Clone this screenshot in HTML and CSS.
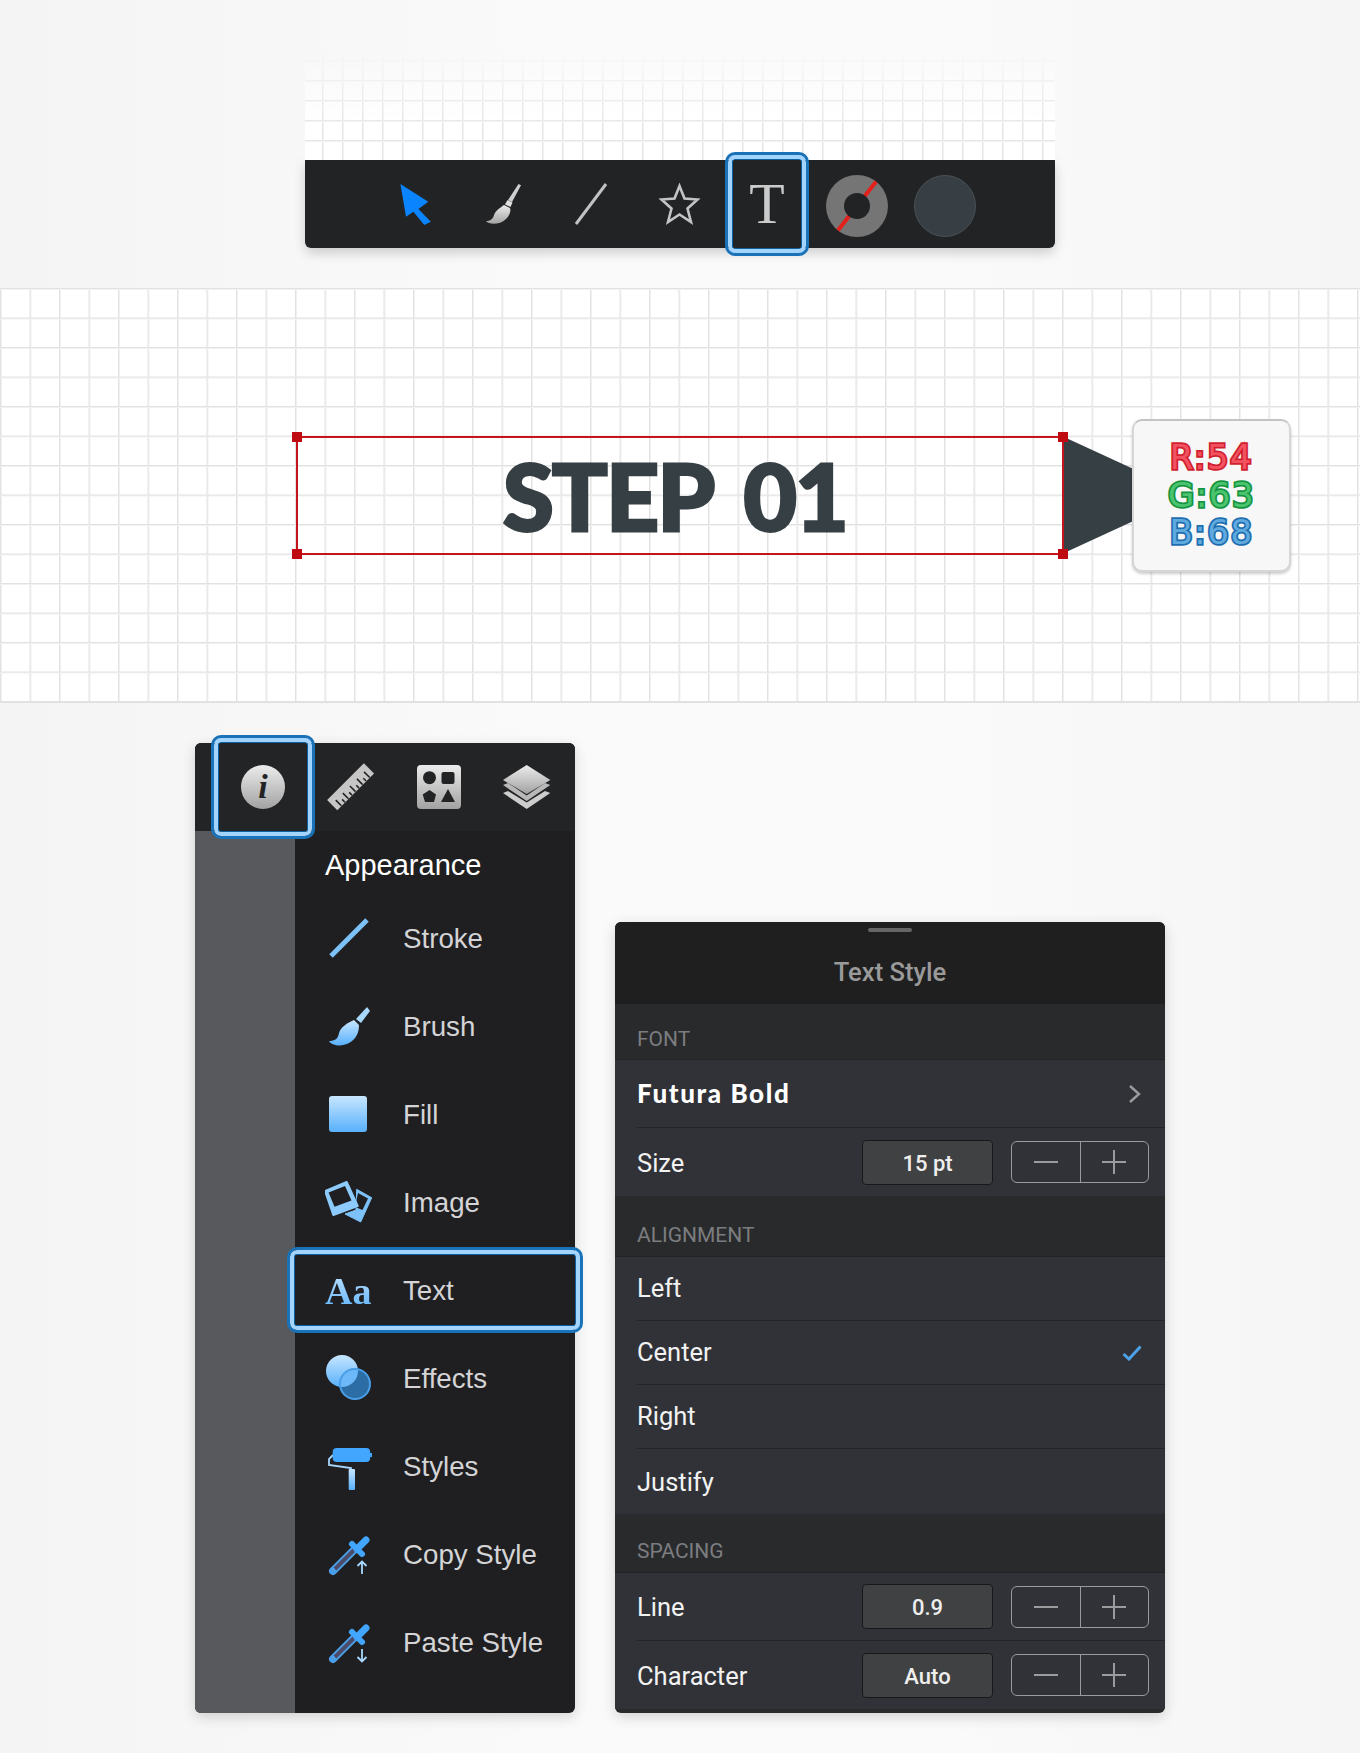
FILE: index.html
```html
<!DOCTYPE html>
<html lang="en">
    <head>
        <meta charset="UTF-8" />
        <title>Step 01 - Text Style</title>
        <link rel="stylesheet" href="styles.css">
    </head>
    <body>
        <div class="zonaBarra">
            <div class="preview"></div>
            <div class="barra">
                <div class="celda">
                    <svg width="48" height="48" viewBox="0 0 48 48">
                        <defs>
                            <linearGradient id="azul" x1="0" y1="0" x2="0" y2="1"><stop offset="0" stop-color="#c8e6ff"/><stop offset="1" stop-color="#58b0fc"/></linearGradient>
                            <linearGradient id="gris" x1="0" y1="0" x2="0" y2="1"><stop offset="0" stop-color="#ececec"/><stop offset="1" stop-color="#a2a2a2"/></linearGradient>
                        </defs>
                        <polygon points="9.4,4 37.3,21.7 27.4,29 39.8,41.7 33.3,45 22.4,31.7 15,36.7" fill="#0a84ff"/>
                    </svg>
                </div>
                <div class="celda">
                    <svg width="48" height="48" viewBox="0 0 48 48">
                        <polygon points="39.5,4 42,5.2 33,22 29,20" fill="#cfcfcf"/>
                        <polygon points="28.5,20 33.5,22.5 31.5,27 26,24.5" fill="#e0e0e0"/>
                        <path d="M25 25 C21 28 17 30 15 35 C14 39 11 41 7 41 C10 45 21 45 27 39 C31 35 32 31 31 28 Z" fill="url(#gris)"/>
                    </svg>
                </div>
                <div class="celda">
                    <svg width="48" height="48" viewBox="0 0 48 48">
                        <line x1="9" y1="44" x2="39" y2="4" stroke="#c2c2c2" stroke-width="3"/>
                    </svg>
                </div>
                <div class="celda">
                    <svg width="48" height="48" viewBox="0 0 48 48">
                        <polygon points="24.5,6 29.5,18.5 42.5,19.5 32.5,28.5 36,42 24.5,34.5 13,42 16.5,28.5 6.5,19.5 19.5,18.5" fill="none" stroke="#c4c4c4" stroke-width="2.6"/>
                    </svg>
                </div>
                <div class="celda sel selBarra"><span class="letraT">T</span></div>
                <div class="celda"><div class="aro"><div class="aroHueco"></div><div class="aroRaya"></div></div></div>
                <div class="celda"><div class="disco"></div></div>
            </div>
        </div>

        <div class="lienzo">
            <div class="caja">
                <span class="asa asa1"></span><span class="asa asa2"></span><span class="asa asa3"></span><span class="asa asa4"></span>
                <h1>STEP 01</h1>
            </div>
            <div class="flecha"></div>
            <div class="etiqueta">
                <div class="rojo">R:54</div>
                <div class="verde">G:63</div>
                <div class="azul">B:68</div>
            </div>
        </div>

        <div class="zonaPaneles">
            <div class="menu">
                <div class="pestanas">
                    <div class="pestana sel selInfo">
                        <svg width="48" height="48" viewBox="0 0 48 48">
                            <circle cx="24" cy="24" r="22" fill="url(#gris)"/>
                            <text x="24" y="35" text-anchor="middle" class="letraI">i</text>
                        </svg>
                    </div>
                    <div class="pestana">
                        <svg width="48" height="48" viewBox="0 0 48 48">
                            <g transform="translate(23.6 23.7) rotate(-45)" stroke="#222325">
                                <rect x="-26" y="-7.2" width="52" height="14.4" fill="#c6c6c6" stroke="none"/>
                                <path d="M-20 7V-1M-15 7V3M-10 7V-1M-5 7V3M0 7V-1M5 7V3M10 7V-1M15 7V3M20 7V-1" stroke-width="1.6" fill="none"/>
                            </g>
                        </svg>
                    </div>
                    <div class="pestana">
                        <svg width="44" height="44" viewBox="0 0 44 44">
                            <rect width="44" height="44" rx="4" fill="url(#gris)"/>
                            <circle cx="12.5" cy="12.7" r="6.5" fill="#222325"/>
                            <rect x="24.5" y="7" width="13" height="12" rx="2" fill="#222325"/>
                            <polygon points="12.5,25 19,29.5 17,37 8,37 5.7,29.5" fill="#222325"/>
                            <polygon points="31,24 38,37 24,37" fill="#222325"/>
                        </svg>
                    </div>
                    <div class="pestana">
                        <svg width="48" height="44" viewBox="0 0 48 44">
                            <polygon points="23.7,0 47.3,15 23.7,29 0,15" fill="url(#gris)"/>
                            <polygon points="0,20 5,18 23.7,30.5 42,18 47.3,20 23.7,36" fill="#b8b8b8"/>
                            <polygon points="0,28 5,26 23.7,37.5 42,26 47.3,28 23.7,44" fill="#cdcdcd"/>
                        </svg>
                    </div>
                </div>
                <div class="cuerpoMenu">
                    <div class="franja"></div>
                    <div class="lista">
                        <h2>Appearance</h2>
                        <div class="item">
                            <svg width="48" height="48" viewBox="0 0 48 48"><line x1="6" y1="41" x2="42" y2="5" stroke="#7cc2f8" stroke-width="5"/></svg>
                            <span>Stroke</span>
                        </div>
                        <div class="item">
                            <svg width="48" height="48" viewBox="0 0 48 48">
                                <polygon points="42,4 45,8 36,20 31,16" fill="#a8d8fd"/>
                                <path d="M29 17 C22 20 16 24 14 30 C13 36 10 38 4 38 C7 43 17 44 24 40 C31 36 34 30 34 22 Z" fill="url(#azul)"/>
                            </svg>
                            <span>Brush</span>
                        </div>
                        <div class="item">
                            <svg width="48" height="48" viewBox="0 0 48 48"><rect x="4" y="5" width="38" height="36" rx="3" fill="url(#azul)"/></svg>
                            <span>Fill</span>
                        </div>
                        <div class="item">
                            <svg width="48" height="48" viewBox="0 0 48 48">
                                <path d="M31.7 10.3 L46.7 18.7 L35.7 43 L20 35 L31 31 Z" fill="#7cc2f8" stroke="#7cc2f8" stroke-linejoin="round"/>
                                <path d="M33 14 L43 19.5 L37.5 31 L30 28 Z" fill="#1f1f21"/>
                                <path d="M0 12 L21.7 3 L32.7 27 L8.3 36 Z" fill="#8ccbfb" stroke="#8ccbfb" stroke-width="2" stroke-linejoin="round"/>
                                <path d="M3.6 13.6 L20 7 L26.5 21.5 L9.5 27.8 Z" fill="#1f1f21"/>
                            </svg>
                            <span>Image</span>
                        </div>
                        <div class="item sel selTexto">
                            <span class="letrasAa">Aa</span>
                            <span>Text</span>
                        </div>
                        <div class="item">
                            <svg width="48" height="48" viewBox="0 0 48 48">
                                <defs><clipPath id="cruce"><circle cx="17" cy="16" r="16"/></clipPath></defs>
                                <circle cx="17" cy="16" r="16" fill="url(#azul)"/>
                                <circle cx="30" cy="29" r="15" fill="#2c6da6" stroke="#4a9fe8" stroke-width="2"/>
                                <circle cx="30" cy="29" r="15" fill="#6cb8f8" stroke="#4a9fe8" stroke-width="2" clip-path="url(#cruce)"/>
                            </svg>
                            <span>Effects</span>
                        </div>
                        <div class="item">
                            <svg width="48" height="48" viewBox="0 0 48 48">
                                <path d="M8 12 L4 16 V22 L26 25 V28" fill="none" stroke="#a8d8fd" stroke-width="1.8"/>
                                <rect x="45" y="10" width="2" height="4" fill="#42a6ff"/>
                                <rect x="7.7" y="5" width="37.5" height="14" rx="4" fill="#42a6ff"/>
                                <rect x="23.7" y="26" width="6.3" height="21" rx="1" fill="url(#azul)"/>
                            </svg>
                            <span>Styles</span>
                        </div>
                        <div class="item">
                            <svg width="48" height="48" viewBox="0 0 48 48">
                                <line x1="8" y1="40" x2="30" y2="18" stroke="#4a9fe8" stroke-width="8" stroke-linecap="round"/>
                                <line x1="10" y1="38" x2="30" y2="18" stroke="#4b4b6b" stroke-width="4"/>
                                <line x1="27" y1="13" x2="37" y2="23" stroke="#42a6ff" stroke-width="6" stroke-linecap="round"/>
                                <line x1="32" y1="18" x2="41" y2="9" stroke="#42a6ff" stroke-width="7" stroke-linecap="round"/>
                                <path d="M37 43 V31 M32.5 35 L37 30.5 L41.5 35" fill="none" stroke="#a8d8fd" stroke-width="1.8"/>
                            </svg>
                            <span>Copy Style</span>
                        </div>
                        <div class="item">
                            <svg width="48" height="48" viewBox="0 0 48 48">
                                <line x1="8" y1="40" x2="30" y2="18" stroke="#4a9fe8" stroke-width="8" stroke-linecap="round"/>
                                <line x1="10" y1="38" x2="30" y2="18" stroke="#4b4b6b" stroke-width="4"/>
                                <line x1="27" y1="13" x2="37" y2="23" stroke="#42a6ff" stroke-width="6" stroke-linecap="round"/>
                                <line x1="32" y1="18" x2="41" y2="9" stroke="#42a6ff" stroke-width="7" stroke-linecap="round"/>
                                <path d="M37 30 V42 M32.5 38 L37 42.5 L41.5 38" fill="none" stroke="#a8d8fd" stroke-width="1.8"/>
                            </svg>
                            <span>Paste Style</span>
                        </div>
                    </div>
                </div>
            </div>

            <div class="estilo">
                <header>
                    <div class="tirador"></div>
                    <h3>Text Style</h3>
                </header>
                <div class="seccion alta56">FONT</div>
                <div class="grupo">
                    <div class="fila fila68 conLinea">
                        <span class="fuente">Futura Bold</span>
                        <svg class="flechita" width="14" height="20" viewBox="0 0 14 20"><path d="M2 2 L11 10 L2 18" fill="none" stroke="#9a9b9d" stroke-width="2.4"/></svg>
                    </div>
                    <div class="fila fila68">
                        <span>Size</span>
                        <div class="valor">15 pt</div>
                        <div class="pasos">
                            <div class="paso"><svg width="24" height="24" viewBox="0 0 24 24"><path d="M0 12H24" stroke="#9a9b9d" stroke-width="2"/></svg></div>
                            <div class="paso"><svg width="24" height="24" viewBox="0 0 24 24"><path d="M0 12H24M12 0V24" stroke="#9a9b9d" stroke-width="2"/></svg></div>
                        </div>
                    </div>
                </div>
                <div class="seccion alta61">ALIGNMENT</div>
                <div class="grupo">
                    <div class="fila fila64 conLinea"><span>Left</span></div>
                    <div class="fila fila64 conLinea">
                        <span>Center</span>
                        <svg class="marca" width="20" height="16" viewBox="0 0 20 16"><path d="M1.5 9 L7 14 L18.5 1.5" fill="none" stroke="#4da3e8" stroke-width="3"/></svg>
                    </div>
                    <div class="fila fila64 conLinea"><span>Right</span></div>
                    <div class="fila fila65"><span>Justify</span></div>
                </div>
                <div class="seccion alta59">SPACING</div>
                <div class="grupo">
                    <div class="fila fila68 conLinea">
                        <span>Line</span>
                        <div class="valor">0.9</div>
                        <div class="pasos">
                            <div class="paso"><svg width="24" height="24" viewBox="0 0 24 24"><path d="M0 12H24" stroke="#9a9b9d" stroke-width="2"/></svg></div>
                            <div class="paso"><svg width="24" height="24" viewBox="0 0 24 24"><path d="M0 12H24M12 0V24" stroke="#9a9b9d" stroke-width="2"/></svg></div>
                        </div>
                    </div>
                    <div class="fila fila68">
                        <span>Character</span>
                        <div class="valor">Auto</div>
                        <div class="pasos">
                            <div class="paso"><svg width="24" height="24" viewBox="0 0 24 24"><path d="M0 12H24" stroke="#9a9b9d" stroke-width="2"/></svg></div>
                            <div class="paso"><svg width="24" height="24" viewBox="0 0 24 24"><path d="M0 12H24M12 0V24" stroke="#9a9b9d" stroke-width="2"/></svg></div>
                        </div>
                    </div>
                </div>
            </div>
        </div>
    </body>
</html>
```
FILE: styles.css
```css
*{
    margin: 0;
    padding: 0;
    box-sizing: border-box;
}
body{
    width: 1360px;
    height: 1753px;
    overflow: hidden;
    background: linear-gradient(90deg, #f4f4f4, #fafafa 40%, #fafafa 70%, #f5f5f5);
    font-family: "Liberation Sans", Arial, sans-serif;
}

/* barra de herramientas */
.zonaBarra{
    height: 288px;
    padding: 50px 305px 0;
}
.preview{
    height: 110px;
    background-color: #fff;
    background-image:
        linear-gradient(#e6e6e6 1px, #f3f3f3 1px, #f3f3f3 2px, transparent 2px),
        linear-gradient(90deg, #e6e6e6 1px, #f3f3f3 1px, #f3f3f3 2px, transparent 2px);
    background-size: 20px 20px;
    background-position: 17px 10px;
    -webkit-mask-image: linear-gradient(transparent, #000 70%);
    mask-image: linear-gradient(transparent, #000 70%);
}
.barra{
    display: flex;
    height: 88px;
    padding-left: 66px;
    background-color: #222325;
    border-radius: 0 0 6px 6px;
    box-shadow: 0 5px 12px rgba(0,0,0,.18);
}
.celda{
    display: flex;
    align-items: center;
    justify-content: center;
    width: 88px;
}
.letraT{
    font-family: "Liberation Serif", serif;
    font-size: 58px;
    line-height: 1;
    color: #cbcbcb;
}
.aro{
    position: relative;
    width: 62px;
    height: 62px;
    margin: 4px 0 0 4px;
    border-radius: 50%;
    background-color: #757575;
    overflow: hidden;
}
.aroRaya{
    position: absolute;
    top: 29px;
    left: -2px;
    width: 66px;
    height: 4px;
    background-color: #e3201b;
    transform: rotate(-52deg);
}
.aroHueco{
    position: absolute;
    top: 18px;
    left: 18px;
    z-index: 1;
    width: 26px;
    height: 26px;
    border-radius: 50%;
    background-color: #222325;
}
.disco{
    width: 62px;
    height: 62px;
    margin: 4px 0 0 4px;
    border-radius: 50%;
    background-color: #373f44;
    border: 1px solid #4a5155;
}

/* marco azul de seleccion */
.sel{
    position: relative;
}
.sel::after{
    content: "";
    position: absolute;
    border-radius: 7px;
    border: 4px solid #a2d4fd;
    outline: 3px solid #1a73b8;
    box-shadow: inset 0 0 0 1px #0d5f9e;
}
.selBarra::after{
    top: -5px;
    bottom: -5px;
    left: 5px;
    right: 5px;
}
.selInfo::after{
    top: -5px;
    bottom: -5px;
    left: -5px;
    right: -5px;
}
.selTexto::after{
    top: 4px;
    bottom: 4px;
    left: -5px;
    right: -5px;
}

/* lienzo */
.lienzo{
    position: relative;
    height: 415px;
    background-color: #fff;
    background-image:
        linear-gradient(#e2e2e2 1px, #f1f1f1 1px, #f1f1f1 2px, transparent 2px),
        linear-gradient(90deg, #e2e2e2 1px, #f1f1f1 1px, #f1f1f1 2px, transparent 2px);
    background-size: 29.5px 29.5px;
    border-bottom: 1px solid #e0e0e0;
}
.caja{
    position: absolute;
    top: 148px;
    left: 296px;
    z-index: 1;
    display: flex;
    align-items: center;
    justify-content: center;
    width: 768px;
    height: 119px;
    border: 2px solid #c5141c;
}
.caja h1{
    margin-right: 10px;
    font-family: "Lato", sans-serif;
    font-weight: 900;
    font-size: 92px;
    line-height: 1;
    letter-spacing: -1.5px;
    word-spacing: 12px;
    color: #363f44;
    -webkit-text-stroke: 3px #363f44;
}
.asa{
    position: absolute;
    width: 10px;
    height: 10px;
    background-color: #c00a12;
}
.asa1{ top: -6px; left: -6px; }
.asa2{ top: -6px; right: -6px; }
.asa3{ bottom: -6px; left: -6px; }
.asa4{ bottom: -6px; right: -6px; }
.flecha{
    position: absolute;
    top: 149px;
    left: 1064px;
    width: 126px;
    height: 116px;
    background-color: #363f44;
    clip-path: polygon(0 0, 100% 50%, 0 100%);
}
.etiqueta{
    position: absolute;
    top: 131px;
    left: 1132px;
    z-index: 2;
    display: flex;
    flex-direction: column;
    align-items: center;
    justify-content: center;
    width: 159px;
    height: 153px;
    background-color: #f7f7f7;
    border: 2px solid #d6d6d6;
    border-top-color: #c4c4c4;
    border-radius: 10px;
    box-shadow: 0 2px 3px rgba(0,0,0,.2);
    font-family: "DejaVu Sans", sans-serif;
    font-size: 34px;
    line-height: 37.5px;
    letter-spacing: 1.5px;
    paint-order: stroke fill;
    -webkit-text-stroke-width: 3.5px;
}
.rojo{
    color: #f2525f;
    -webkit-text-stroke-color: #d01f2e;
}
.verde{
    color: #4cc46f;
    -webkit-text-stroke-color: #149440;
}
.azul{
    color: #5fa9de;
    -webkit-text-stroke-color: #1d6fb0;
}

/* paneles */
.zonaPaneles{
    display: flex;
    align-items: flex-start;
    gap: 40px;
    padding: 40px 0 0 195px;
}
.menu{
    width: 380px;
    height: 970px;
    border-radius: 6px;
    box-shadow: 0 4px 14px rgba(0,0,0,.16);
    background-color: #1f1f21;
}
.pestanas{
    display: flex;
    height: 88px;
    padding-left: 24px;
    background-color: #232426;
    border-radius: 6px 6px 0 0;
}
.pestana{
    display: flex;
    align-items: center;
    justify-content: center;
    width: 88px;
}
.letraI{
    font-family: "Liberation Serif", serif;
    font-style: italic;
    font-weight: bold;
    font-size: 34px;
    fill: #222325;
}
.cuerpoMenu{
    display: flex;
    height: 882px;
}
.franja{
    width: 100px;
    background-color: #58595c;
    border-radius: 0 0 0 6px;
}
.lista{
    flex: 1;
}
.lista h2{
    display: flex;
    align-items: center;
    height: 63px;
    padding: 6px 0 0 30px;
    font-weight: normal;
    font-size: 29px;
    color: #fff;
}
.item{
    display: flex;
    align-items: center;
    height: 88px;
    padding: 1px 0 0 30px;
    font-size: 27.7px;
    color: #d4d4d6;
}
.item svg{
    flex: none;
}
.item > span:last-child{
    margin-left: 30px;
}
.letrasAa{
    width: 48px;
    font-family: "Liberation Serif", serif;
    font-weight: bold;
    font-size: 38px;
    background: linear-gradient(#c8e6ff, #58b0fc);
    -webkit-background-clip: text;
    background-clip: text;
    color: transparent;
}

.estilo{
    width: 550px;
    height: 791px;
    margin-top: 179px;
    border-radius: 6px;
    overflow: hidden;
    box-shadow: 0 4px 14px rgba(0,0,0,.16);
    background-color: #292a2c;
    font-family: "Roboto", sans-serif;
    font-size: 25.5px;
    color: #f2f2f2;
}
.estilo header{
    height: 82px;
    padding-top: 6px;
    background-color: #1f1f20;
    text-align: center;
}
.tirador{
    width: 44px;
    height: 4px;
    margin: 0 auto;
    border-radius: 2px;
    background-color: #666;
}
.estilo h3{
    margin-top: 25px;
    font-weight: 500;
    font-size: 25.6px;
    line-height: 30px;
    color: #9a9a9a;
}
.seccion{
    display: flex;
    align-items: flex-end;
    padding: 0 0 9px 22px;
    font-size: 21px;
    line-height: 24px;
    color: #7c7d80;
    border-bottom: 1px solid #222326;
}
.alta56{ height: 56px; padding-bottom: 8px; }
.alta61{ height: 61px; }
.alta59{ height: 59px; }
.grupo{
    background-color: #313237;
}
.fila{
    display: flex;
    align-items: center;
    margin-left: 22px;
    padding-right: 16px;
}
.fila68{ height: 68px; }
.fila64{ height: 64px; }
.fila65{ height: 65px; }
.conLinea{
    border-bottom: 1.5px solid #232428;
}
.fila > span{
    flex: 1;
}
.fila64 > span{
    padding-bottom: 2px;
}
.fila68 > span{
    padding-top: 1px;
}
.fila68 > .fuente{
    padding: 0 0 2px;
    font-family: "Lato", sans-serif;
    font-weight: 900;
    font-size: 26px;
    letter-spacing: 1.6px;
    color: #fff;
}
.flechita{
    margin-right: 7px;
}
.marca{
    margin-right: 7px;
}
.valor{
    width: 131px;
    height: 45px;
    border: 1.5px solid #17181a;
    border-radius: 4px;
    background-color: #404143;
    font-weight: 500;
    font-size: 22px;
    line-height: 45px;
    text-align: center;
    color: #eee;
}
.pasos{
    display: flex;
    width: 138px;
    height: 42px;
    margin-left: 18px;
    border: 1.5px solid #9a9b9d;
    border-radius: 6px;
}
.paso{
    display: flex;
    flex: 1;
    align-items: center;
    justify-content: center;
}
.paso + .paso{
    border-left: 1.5px solid #9a9b9d;
}
```
